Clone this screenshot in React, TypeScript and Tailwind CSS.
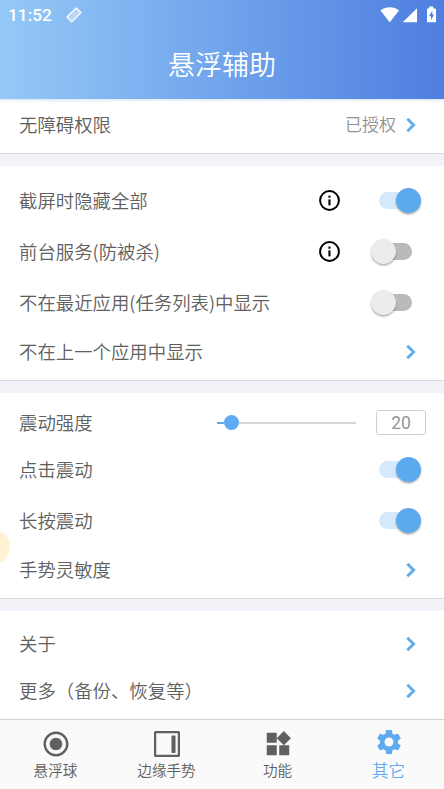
import { useState } from "react";
import type { ReactNode } from "react";
import { MdRadioButtonChecked, MdSettings, MdWidgets } from "react-icons/md";

const Chevron = () => (
  <svg width="12" height="16" viewBox="0 0 12 16" className="mr-[27px] shrink-0">
    <path d="M2.3 1.7 8.6 8l-6.3 6.3" fill="none" stroke="#62ace9" strokeWidth="2.9" />
  </svg>
);

const InfoIcon = () => (
  <svg width="21" height="21" viewBox="0 0 21 21" className="shrink-0">
    <circle cx="10.5" cy="10.5" r="9.4" fill="none" stroke="#000" strokeWidth="2" />
    <rect x="9.4" y="9.4" width="2.1" height="6" fill="#000" />
    <rect x="9.4" y="5.6" width="2.1" height="2.1" fill="#000" />
  </svg>
);

const Switch = ({ defaultOn = false }: { defaultOn?: boolean }) => {
  const [on, setOn] = useState(defaultOn);

  return (
    <button onClick={() => setOn(!on)} className="mr-[23px] ml-[31px] flex h-[26px] w-[50px] shrink-0 items-center">
      <span
        className={`ml-[8px] flex h-[17px] items-center rounded-full ${
          on ? "w-[34px] justify-end bg-[#d5e9fc]" : "w-[33px] bg-[#bababa]"
        }`}
      >
        <span
          className={`h-[25px] w-[25px] shrink-0 rounded-full shadow-[0_1.5px_2px_rgba(0,0,0,0.32)] ${
            on ? "-mr-[8px] bg-[#5caaee]" : "-ml-[8px] bg-[#ececec]"
          }`}
        />
      </span>
    </button>
  );
};

const Row = ({ label, className = "h-[51px]", children }: { label: string; className?: string; children: ReactNode }) => (
  <div className={`flex items-center pl-[19px] ${className}`}>
    <span className="-mt-[2px] flex-1 whitespace-nowrap text-[18.4px] leading-6">{label}</span>
    {children}
  </div>
);

const StatusBar = () => (
  <div className="flex h-[30px] items-center pl-2 pr-2 text-white">
    <span className="w-[44px] font-['Roboto',sans-serif] text-[17.3px] font-medium leading-5">11:52</span>
    <svg width="16" height="16" viewBox="0 0 16 16" className="ml-[14px]">
      <path d="M10.2 1 15 5.6 5.8 14.8 1 10Z" fill="#fff" fillOpacity="0.4" stroke="#fff" strokeWidth="1.2" strokeLinejoin="round" />
    </svg>
    <svg width="56" height="18" viewBox="0 0 56 18" fill="#fff" className="ml-auto">
      <path d="M.5 4.4C5.7.1 13.8.1 19 4.4L9.7 16.3Z" />
      <path d="M37 2.3v14H22.7Z" />
      <path fillRule="evenodd" d="M49.2.5h4v2h2q.8 0 .8.8v12.2q0 .8-.8.8h-7.4q-.8 0-.8-.8V3.3q0-.8.8-.8h1.4ZM52.3 4.800 49 10.200h2V14l3.200-5.500h-1.900Z" />
    </svg>
  </div>
);

const App = () => {
  const [strength] = useState(20);

  return (
    <div className="relative flex h-[789px] w-[444px] flex-col overflow-hidden bg-[#f1f3f8] font-['Noto_Sans_CJK_SC',sans-serif] font-[350] text-[#606060]">
      <header className="z-10 h-[99px] shrink-0 bg-linear-to-r from-[#95c9f6] to-[#4f7ee0] shadow-[0_1px_3px_rgba(80,130,200,0.25)]">
        <StatusBar />
        <h1 className="mt-[14px] text-center text-[27px] font-[350] leading-10 text-white">悬浮辅助</h1>
      </header>

      <main className="flex flex-col gap-3">
        <section className="h-[55px] border-b border-[#d9dadd] bg-white pt-0.5">
          <Row label="无障碍权限" className="h-[47px]">
            <span className="mr-[9px] -mt-px text-[17px] leading-6 text-[#909090]">已授权</span>
            <Chevron />
          </Row>
        </section>

        <section className="h-[215px] border-b border-[#d9dadd] bg-white pt-[9px]">
          <Row label="截屏时隐藏全部">
            <InfoIcon />
            <Switch defaultOn />
          </Row>
          <Row label="前台服务(防被杀)">
            <InfoIcon />
            <Switch />
          </Row>
          <Row label="不在最近应用(任务列表)中显示">
            <Switch />
          </Row>
          <Row label="不在上一个应用中显示" className="h-[47px]">
            <Chevron />
          </Row>
        </section>

        <section className="h-[206px] border-b border-[#d9dadd] bg-white pt-2">
          <Row label="震动强度" className="h-[43px]">
            <div className="mr-5 flex w-[139px] items-center">
              <div className="h-[2px] bg-[#5caaee]" style={{ width: `${(strength - 15) * 1.4}px` }} />
              <div className="h-[15px] w-[15px] rounded-full bg-[#5faaf0]" />
              <div className="h-[2px] flex-1 bg-[#d6d6d6]" />
            </div>
            <div className="mr-[18px] flex h-[25px] w-[50px] items-center justify-center rounded-[3px] border border-[#cfcfcf] pt-[2px] font-['Roboto',sans-serif] text-[17.5px] font-normal text-[#959595]">
              {strength}
            </div>
          </Row>
          <Row label="点击震动">
            <Switch defaultOn />
          </Row>
          <Row label="长按震动">
            <Switch defaultOn />
          </Row>
          <Row label="手势灵敏度" className="h-[47px]">
            <Chevron />
          </Row>
        </section>

        <section className="h-[108px] bg-white pt-[9px]">
          <Row label="关于" className="h-[47px]">
            <Chevron />
          </Row>
          <Row label="更多（备份、恢复等）" className="h-[47px]">
            <Chevron />
          </Row>
        </section>
      </main>

      <nav className="grid h-[70px] shrink-0 grid-cols-4 border-t border-[#d3d3d3] bg-[#fafafa] text-[14.6px] leading-5">
        <div className="flex flex-col items-center pt-[9px]">
          <MdRadioButtonChecked size={30} />
          <span className="mt-px">悬浮球</span>
        </div>
        <div className="flex flex-col items-center pt-[9px]">
          <svg width="30" height="30" viewBox="0 0 30 30">
            <rect x="3.1" y="3.1" width="23.8" height="23.8" rx="0.5" fill="none" stroke="currentColor" strokeWidth="2.2" />
            <rect x="19.5" y="6.500" width="4" height="17.500" rx="0.800" fill="currentColor" />
          </svg>
          <span className="mt-px">边缘手势</span>
        </div>
        <div className="flex flex-col items-center pt-[9px]">
          <MdWidgets size={30} />
          <span className="mt-px">功能</span>
        </div>
        <div className="flex flex-col items-center pt-[7px] text-[16.5px] text-[#5faaf0]">
          <MdSettings size={30} />
          <span className="mt-[3px]">其它</span>
        </div>
      </nav>

      {/* floating ball docked at the left edge */}
      <div className="absolute -left-[24px] top-[530px] h-[34px] w-[34px] rounded-full bg-[#fff3d2]" />
    </div>
  );
};

export default App;
